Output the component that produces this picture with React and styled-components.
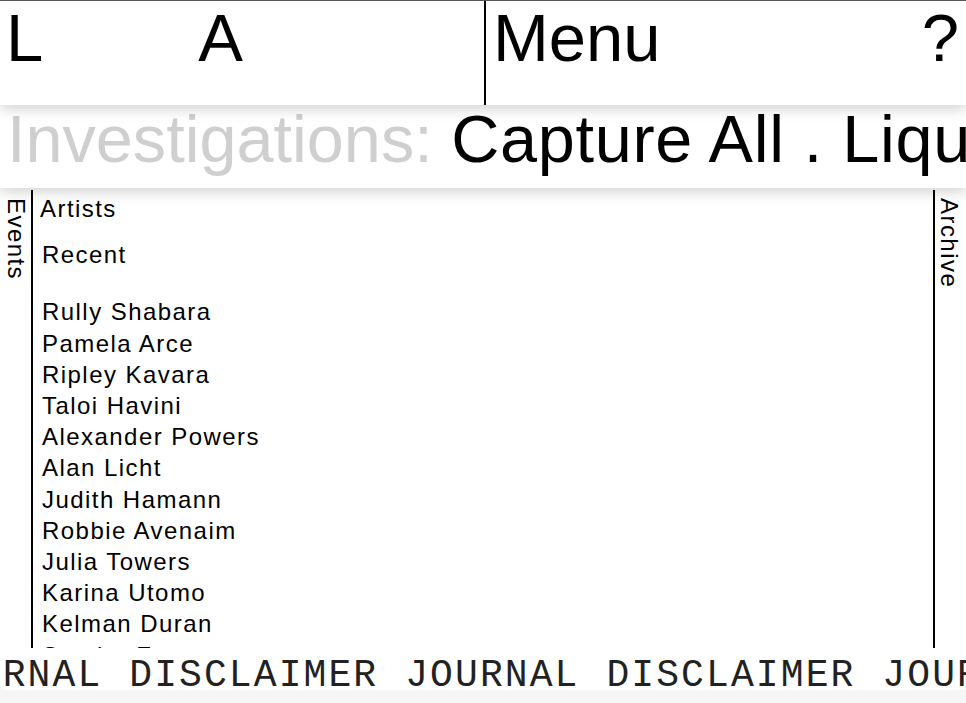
import React from 'react';
import styled, { createGlobalStyle } from 'styled-components';

const artists = [
  'Rully Shabara',
  'Pamela Arce',
  'Ripley Kavara',
  'Taloi Havini',
  'Alexander Powers',
  'Alan Licht',
  'Judith Hamann',
  'Robbie Avenaim',
  'Julia Towers',
  'Karina Utomo',
  'Kelman Duran',
  'Sandra Fenton',
  'Nina Buchanan',
];

function App() {
  return (
    <>
      <GlobalStyle />
      <Page>
        <Header>
          <Logo>
            <span>L</span>
            <span className='second'>A</span>
          </Logo>
          <MenuBar>
            <span>Menu</span>
            <span>?</span>
          </MenuBar>
        </Header>

        <TitleBar>
          <span className='label'>Investigations: </span>
          <span className='title'>Capture All . Liquid Architecture</span>
        </TitleBar>

        <Main>
          <SideTab side='left'>Events</SideTab>

          <Content>
            <Heading>Artists</Heading>
            <SubHeading>Recent</SubHeading>
            <List>
              {artists.map((name) => (
                <li key={name}>{name}</li>
              ))}
            </List>
          </Content>

          <SideTab side='right'>Archive</SideTab>
        </Main>

        <Ticker>
          <span>JOURNAL DISCLAIMER JOURNAL DISCLAIMER JOURNAL DISCLAIMER</span>
        </Ticker>
        <BottomStrip />
      </Page>
    </>
  );
}

const GlobalStyle = createGlobalStyle`
  html, body {
    margin: 0;
    padding: 0;
    background: #f6f6f6;
    overflow: hidden;
  }

  body {
    font-family: 'Liberation Sans', Arial, Helvetica, sans-serif;
    color: #000;
  }
`;

const Page = styled.div`
  display: flex;
  flex-direction: column;
  height: 100vh;
  width: 100vw;
  overflow: hidden;
`;

const Header = styled.header`
  display: flex;
  height: 104px;
  border-top: 1px solid #555;
  background: #fff;
  font-size: 67px;
  line-height: 67px;
  position: relative;
  z-index: 3;
  box-shadow: 0 3px 14px rgba(0, 0, 0, 0.2);
`;

const Logo = styled.div`
  display: flex;
  width: 478px;
  padding: 3px 0 0 6px;
  border-right: 2px solid #000;

  .second {
    margin-left: 155px;
  }
`;

const MenuBar = styled.div`
  flex: 1;
  display: flex;
  justify-content: space-between;
  padding: 3px 7px 0 7px;
`;

const TitleBar = styled.div`
  height: 83px;
  padding: 1px 0 0 7px;
  box-sizing: border-box;
  background: #fff;
  font-size: 66.6px;
  line-height: 67px;
  white-space: nowrap;
  overflow: hidden;
  position: relative;
  z-index: 2;
  box-shadow: 0 3px 14px rgba(0, 0, 0, 0.2);

  .label {
    color: #cfcfcf;
  }

  .title {
    letter-spacing: 0.7px;
  }
`;

const Main = styled.main`
  flex: 1;
  display: flex;
  min-height: 0;
  overflow: hidden;
  background: #fff;
  font-size: 24px;
  letter-spacing: 1.45px;
`;

const SideTab = styled.div`
  writing-mode: vertical-rl;
  line-height: 24px;
  box-sizing: border-box;
  width: 33px;
  margin-top: 2px;
  padding-top: 8px;
  ${({ side }) =>
    side === 'left'
      ? 'border-right: 2px solid #000; padding-right: 3px;'
      : 'border-left: 2px solid #000; padding-right: 5px;'}
`;

const Content = styled.section`
  flex: 1;
  padding: 5px 0 0 7px;
  line-height: 31.2px;
`;

const Heading = styled.h2`
  margin: 0;
  font-size: 24px;
  font-weight: normal;
`;

const SubHeading = styled.h3`
  margin: 15px 0 0 2px;
  font-size: 24px;
  font-weight: normal;
`;

const List = styled.ul`
  list-style: none;
  margin: 26px 0 0 2px;
  padding: 0;
`;

const Ticker = styled.footer`
  height: 42px;
  flex-shrink: 0;
  background: #fff;
  overflow: hidden;
  white-space: nowrap;
  border-radius: 0 0 6px 6px;
  font-family: 'Courier New', Courier, 'Nimbus Mono PS', FreeMono, 'Liberation Mono', monospace;
  font-size: 38px;
  letter-spacing: 2.1px;
  word-spacing: 2px;
  line-height: 56px;
  color: #222;

  span {
    display: inline-block;
    margin-left: -72px;
  }
`;

const BottomStrip = styled.div`
  height: 13px;
  flex-shrink: 0;
  background: #f6f6f6;
`;

export default App;
